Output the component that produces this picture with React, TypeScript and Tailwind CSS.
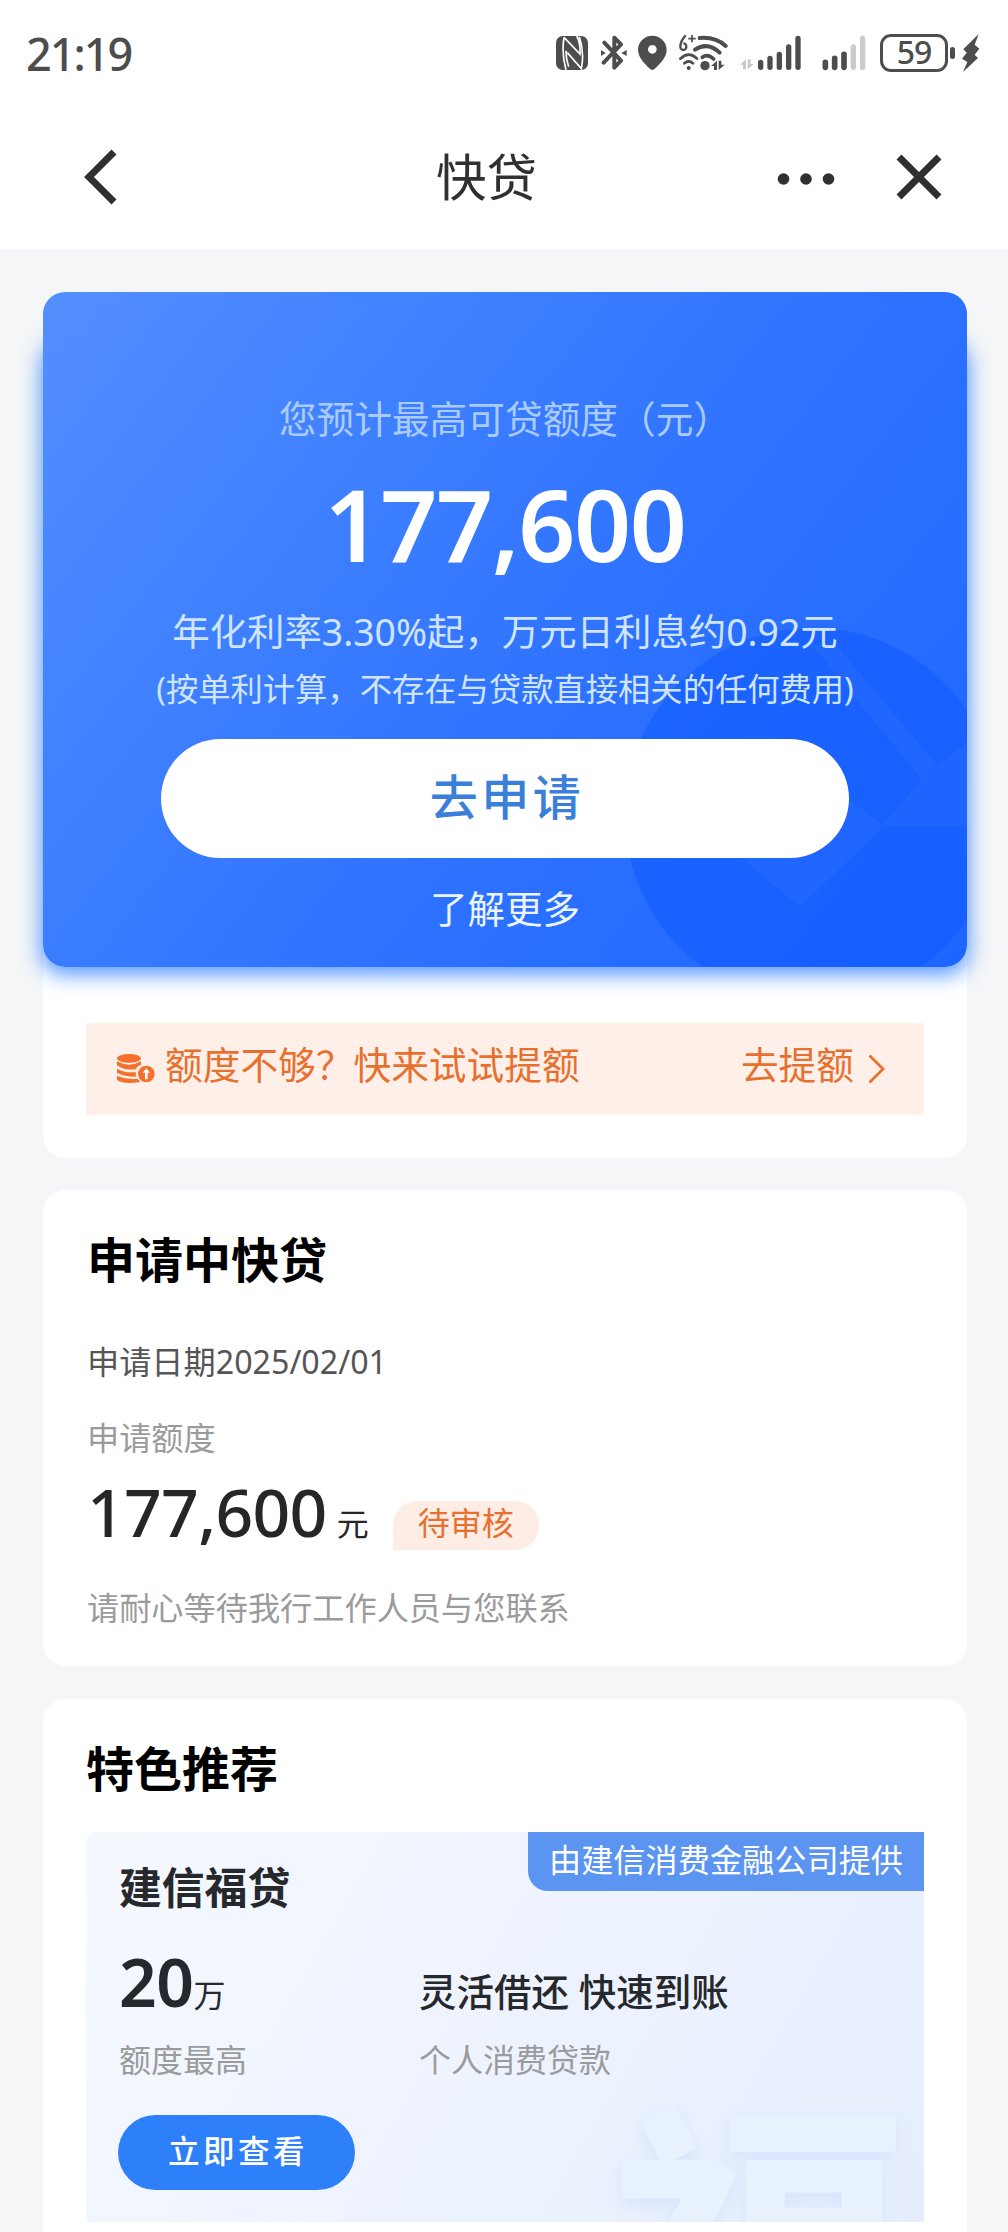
import React from "react";

function StatusBar() {
  return (
    <div className="flex h-[106px] items-start justify-between pl-[26px] pr-[28px]">
      <div className="mt-[24px] text-[45px] font-medium leading-[60px] tracking-[-2px] text-[#4d4d4d]">21:19</div>
      <div className="mt-[34px] flex h-[38px] items-start text-[#4d4d4d]">
        {/* NFC */}
        <svg className="mt-[2px]" width="32" height="34" viewBox="0 0 96 102">
          <rect width="96" height="102" rx="20" fill="currentColor" />
          <path d="M24 4 L72 54 Q74 22 62 0 M24 4 Q16 52 30 102 M30 44 Q30 70 38 92 M34 50 L76 98 Q86 50 70 2" fill="none" stroke="#fff" strokeWidth="5" />
        </svg>
        {/* Bluetooth */}
        <svg className="ml-[13px]" width="27" height="38" viewBox="0 0 81 114">
          <path d="M10 26 L60 80 L40 101 V11 L60 31 L8 86" fill="none" stroke="currentColor" strokeWidth="12" strokeLinejoin="round" strokeLinecap="round" />
          <path d="M0 48 L14 57 L0 66Z M77 48 L61 57 L77 66Z" fill="currentColor" />
        </svg>
        {/* Location */}
        <svg className="ml-[10px] mt-[1px]" width="29" height="36" viewBox="0 0 87 108">
          <path fillRule="evenodd" fill="currentColor" d="M43 2 C67 2 86 21 86 44 C86 70 60 92 48 103 Q43 107 38 103 C26 92 0 70 0 44 C0 21 19 2 43 2Z M43 30 a13 13 0 1 0 .1 0Z" />
        </svg>
        {/* Wi-Fi 6+ */}
        <svg className="ml-[12px]" width="49" height="38" viewBox="0 0 147 114">
          <g fill="none" stroke="currentColor">
            <path d="M20 4 Q4 22 4 38 A9 10 0 1 0 13 28" strokeWidth="7" />
            <path d="M28 14 H50 M39 3 V25" strokeWidth="5" />
            <path d="M62 12 Q110 8 140 36" strokeWidth="12" strokeLinecap="round" />
            <path d="M48 47 Q86 22 122 56" strokeWidth="12" strokeLinecap="round" />
            <path d="M70 70 Q86 58 104 75" strokeWidth="11" strokeLinecap="round" />
            <path d="M4 74 Q30 50 54 74" strokeWidth="8" strokeLinecap="round" />
            <path d="M16 88 Q29 76 42 88" strokeWidth="8" strokeLinecap="round" />
          </g>
          <circle cx="29" cy="102" r="6" fill="currentColor" />
          <circle cx="78" cy="95" r="14" fill="currentColor" />
          <path d="M96 96 L114 80 V108 H105 V96Z M137 92 L119 108 V80 H127 V92Z" fill="currentColor" />
        </svg>
        {/* Signal, SIM 1 */}
        <svg className="ml-[12px]" width="62" height="38" viewBox="0 0 186 114">
          <path d="M0 92 L18 76 V106 H9 V92Z M41 90 L23 106 V76 H32 V90Z" fill="#c9c9c9" />
          <g stroke="currentColor" strokeWidth="16" strokeLinecap="round">
            <path d="M62 85 V100 M90 73 V100 M118 61 V100 M146 39 V100 M174 13 V100" />
          </g>
        </svg>
        {/* Signal, SIM 2 */}
        <svg className="ml-[20px]" width="45" height="38" viewBox="0 0 135 114">
          <path d="M10 85 V100 M38 73 V100 M66 61 V100" stroke="currentColor" strokeWidth="17" strokeLinecap="round" />
          <path d="M94 39 V100 M122 13 V100" stroke="#cbcbcb" strokeWidth="16" strokeLinecap="round" />
        </svg>
        {/* Battery */}
        <div className="ml-[13px] flex items-center">
          <div className="flex h-[38px] w-[68px] items-center justify-center rounded-[11px] border-[3px] border-[#4d4d4d] pb-[2px] text-[32px] font-medium leading-none tracking-[-1px]">
            59
          </div>
          <div className="ml-[2px] h-[12px] w-[5px] rounded-full bg-[#4d4d4d]" />
          <svg className="ml-[7px]" width="18" height="38" viewBox="0 0 54 114">
            <path d="M50 0 L4 46 L14 56 L0 74 L16 84 L3 114 L48 72 L38 62 L52 44 L38 32Z" fill="currentColor" />
          </svg>
        </div>
      </div>
    </div>
  );
}

function NavBar() {
  return (
    <div className="flex h-[143px] items-start pl-[84px]">
      <svg className="mt-[43px]" width="36" height="56" viewBox="0 0 36 56" fill="none" stroke="#303030" strokeWidth="7">
        <path d="M30 3 L5 28 L30 53" />
      </svg>
      <div className="ml-[316px] mt-[36px] w-[102px] text-[50.5px] leading-[70px] text-[#303030]">快贷</div>
      <svg className="ml-[239px] mt-[66px]" width="58" height="14" viewBox="0 0 58 14" fill="#303030">
        <circle cx="6.5" cy="7" r="5.8" />
        <circle cx="29" cy="7" r="5.8" />
        <circle cx="51.5" cy="7" r="5.8" />
      </svg>
      <svg className="ml-[61px] mt-[48px]" width="46" height="46" viewBox="0 0 46 46" fill="none" stroke="#303030" strokeWidth="7">
        <path d="M3 3 L43 43 M43 3 L3 43" />
      </svg>
    </div>
  );
}

function HeroCard() {
  return (
    <div className="relative h-[675px]">
      <div className="absolute inset-x-0 bottom-0 top-[45px] rounded-[22px] shadow-[0_6px_20px_2px_rgba(35,120,255,0.75)]" />
      <div className="relative flex h-full flex-col items-center overflow-hidden rounded-[22px] bg-[linear-gradient(128deg,#548fff_0%,#3f80ff_30%,#2e72ff_58%,#1c66ff_100%)]">
        <svg className="absolute bottom-0 right-0" width="367" height="375" viewBox="600 592 367 375">
          <circle cx="812" cy="815" r="187" fill="#0d57ff" opacity="0.5" />
          <path d="M812 645 L836 645 L938 766 L967 742 V827 H883 L800 907 L740 857 L850 800 L882 825 L922 780Z" fill="#3c7cff" opacity="0.2" />
        </svg>
        <div className="relative mt-[97px] text-[37.7px] leading-[60px] text-[#a9cbff]">您预计最高可贷额度（元）</div>
        <div className="relative mt-[24px] text-[100px] font-semibold leading-[100px] tracking-[-1.4px] text-white">177,600</div>
        <div className="relative mt-[31px] text-[37.4px] leading-[56px] text-[#cfe4ff]">年化利率3.30%起，万元日利息约0.92元</div>
        <div className="relative mt-[4px] text-[32.3px] leading-[48px] text-[#cfe4ff]">(按单利计算，不存在与贷款直接相关的任何费用)</div>
        <button className="relative mt-[27px] h-[119px] w-[688px] rounded-full bg-white pb-[3px] pl-[4px] text-[48px] font-medium tracking-[3.5px] text-[#3a7fd9]">
          去申请
        </button>
        <div className="relative mt-[26px] text-[37.5px] leading-[50px] text-[#eaf5ff]">了解更多</div>
      </div>
    </div>
  );
}

function RaiseLimitBanner() {
  return (
    <div className="mx-[43px] mt-[56px] flex h-[92px] items-center bg-[#fef0e8] pl-[31px] pr-[39px] text-[37.7px] text-[#e8702f]">
      <svg width="39" height="30" viewBox="0 0 117 90" fill="#f4702c">
        <ellipse cx="36" cy="13" rx="36" ry="13" />
        <path d="M0 22 Q36 42 72 22 V32 Q60 36 56 46 Q20 50 0 34Z M0 44 Q24 58 56 54 Q56 64 58 68 Q20 68 0 56Z M0 66 Q30 78 62 74 L70 84 Q20 92 0 78Z" />
        <circle cx="88" cy="60" r="25" />
        <path d="M88 43 L99 56 H92 V76 H84 V56 H77Z" fill="#fff" />
      </svg>
      <span className="-mt-[8px] ml-[9px] leading-[60px]">额度不够？快来试试提额</span>
      <span className="-mt-[8px] ml-auto leading-[60px]">去提额</span>
      <svg className="ml-[14px]" width="17" height="30" viewBox="0 0 17 30" fill="none" stroke="#e8702f" strokeWidth="2.8">
        <path d="M1.5 1.5 L15 15 L1.5 28.5" />
      </svg>
    </div>
  );
}

function PendingCard() {
  return (
    <section className="mt-[32px] flex h-[476px] flex-col rounded-[22px] bg-white px-[44px]">
      <h2 className="mt-[40px] text-[48px] font-bold leading-[60px] text-black">申请中快贷</h2>
      <p className="mt-[48px] text-[32.2px] leading-[48px] text-[#555]">申请日期2025/02/01</p>
      <p className="mt-[28px] text-[32.2px] leading-[48px] text-[#9b9b9b]">申请额度</p>
      <div className="mt-[8px] flex h-[84px]">
        <span className="text-[66px] font-medium leading-[82px] tracking-[-0.7px] text-[#262626]">177,600</span>
        <span className="ml-[10px] mt-[30px] text-[32px] leading-[48px] text-[#262626]">元</span>
        <span className="ml-[24px] mt-[31px] h-[49px] w-[146px] rounded-[24px] rounded-bl-none bg-[#feede4] text-center text-[32px] leading-[44px] text-[#e8702f]">
          待审核
        </span>
      </div>
      <p className="mt-[30px] text-[32.2px] leading-[48px] text-[#9b9b9b]">请耐心等待我行工作人员与您联系</p>
    </section>
  );
}

function FeaturedCard() {
  return (
    <section className="mt-[33px] h-[580px] rounded-t-[22px] bg-white px-[43px]">
      <h2 className="pt-[40px] text-[48px] font-bold leading-[60px] text-black">特色推荐</h2>
      <div className="relative mt-[33px] h-[390px] overflow-hidden rounded-tl-[10px] bg-[linear-gradient(120deg,#f5f8ff_0%,#eff4fe_40%,#e6eefd_100%)] pl-[33px]">
        <div className="pointer-events-none absolute left-[522px] top-[262px] text-[302px] font-black leading-[302px] text-[#e8f2fe] [text-shadow:0_6px_18px_#d6e4fc]">福</div>
        <div className="absolute right-0 top-0 h-[59px] w-[396px] rounded-bl-[20px] bg-[#5b94f1] text-center text-[32.2px] leading-[56px] text-white">
          由建信消费金融公司提供
        </div>
        <h3 className="relative pt-[28px] text-[42.8px] font-bold leading-[56px] text-[#26282c]">建信福贷</h3>
        <div className="relative mt-[28px] flex">
          <div className="w-[300px]">
            <div className="flex h-[84px]">
              <span className="text-[66px] font-semibold leading-[74px] tracking-[-0.5px] text-[#26282c]">20</span>
              <span className="mt-[27px] text-[32px] leading-[48px] text-[#26282c]">万</span>
            </div>
            <p className="mt-[8px] text-[32px] leading-[48px] text-[#9b9b9b]">额度最高</p>
          </div>
          <div>
            <p className="pt-[20px] text-[37.5px] font-medium leading-[56px] text-[#26282c]">灵活借还 快速到账</p>
            <p className="mt-[16px] text-[32px] leading-[48px] text-[#9b9b9b]">个人消费贷款</p>
          </div>
        </div>
        <button className="relative -ml-[1px] mt-[31px] block h-[75px] w-[237px] rounded-full bg-[#2e80fa] pb-[3px] pl-[3px] text-[31.5px] font-medium tracking-[3.5px] text-white">
          立即查看
        </button>
      </div>
    </section>
  );
}

export default function App() {
  return (
    <div className="h-[2232px] w-[1008px] overflow-hidden bg-[#f4f6f8] [font-family:'Noto_Sans','Noto_Sans_CJK_SC',sans-serif]">
      <header className="bg-white">
        <StatusBar />
        <NavBar />
      </header>
      <main className="pl-[43px] pr-[41px] pt-[43px]">
        <section className="h-[866px] rounded-[22px] bg-white">
          <HeroCard />
          <RaiseLimitBanner />
        </section>
        <PendingCard />
        <FeaturedCard />
      </main>
    </div>
  );
}
